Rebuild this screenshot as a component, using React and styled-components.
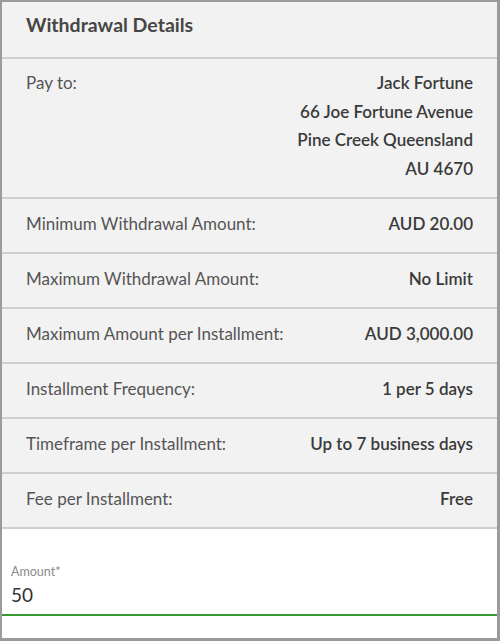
import React from "react";
import styled, { createGlobalStyle } from "styled-components";

const Global = createGlobalStyle`
  html, body { margin: 0; padding: 0; background: #ffffff; }
  body { font-family: Lato, "Open Sans", sans-serif; }
  * { box-sizing: border-box; }
`;

const Frame = styled.div`
  width: 500px;
  height: 641px;
  border-style: solid;
  border-color: #9b9b9b;
  border-width: 2px 3px 3px 2px;
  background: #ffffff;
  display: flex;
  flex-direction: column;
`;

const Panel = styled.div`
  background: #f2f2f2;
  display: flex;
  flex-direction: column;
`;

const Header = styled.div`
  height: 57px;
  padding: 0 24px 11px 24px;
  display: flex;
  align-items: center;
  font-size: 19.5px;
  font-weight: 700;
  color: #464646;
  border-bottom: 2px solid #cfcfcf;
`;

const Row = styled.div`
  display: flex;
  justify-content: space-between;
  align-items: ${(p) => (p.$multi ? "flex-start" : "center")};
  height: ${(p) => (p.$multi ? "140px" : "55px")};
  padding: ${(p) => (p.$multi ? "10px 24px 0 24px" : "0 24px 2px 24px")};
  border-bottom: 2px solid #cfcfcf;
  font-size: 17px;
  line-height: 28.5px;
`;

const Label = styled.span`
  color: #555555;
`;

const Value = styled.div`
  color: #3a3a3a;
  font-weight: 600;
  text-align: right;
  display: flex;
  flex-direction: column;
`;

const Field = styled.div`
  padding: 35px 9px 6px 9px;
  display: flex;
  flex-direction: column;
  border-bottom: 2px solid #3c9a33;
`;

const FieldLabel = styled.label`
  font-size: 12.5px;
  color: #8a8a8a;
  line-height: 16px;
  margin-bottom: 2px;
`;

const FieldValue = styled.div`
  font-size: 19px;
  color: #333333;
  line-height: 26px;
`;

const rows = [
  ["Minimum Withdrawal Amount:", "AUD 20.00"],
  ["Maximum Withdrawal Amount:", "No Limit"],
  ["Maximum Amount per Installment:", "AUD 3,000.00"],
  ["Installment Frequency:", "1 per 5 days"],
  ["Timeframe per Installment:", "Up to 7 business days"],
  ["Fee per Installment:", "Free"],
];

export default function App() {
  return (
    <>
      <Global />
      <Frame>
        <Panel>
          <Header>Withdrawal Details</Header>
          <Row $multi>
            <Label>Pay to:</Label>
            <Value>
              <span>Jack Fortune</span>
              <span>66 Joe Fortune Avenue</span>
              <span>Pine Creek Queensland</span>
              <span>AU 4670</span>
            </Value>
          </Row>
          {rows.map(([l, v]) => (
            <Row key={l}>
              <Label>{l}</Label>
              <Value>{v}</Value>
            </Row>
          ))}
        </Panel>
        <Field>
          <FieldLabel>Amount*</FieldLabel>
          <FieldValue>50</FieldValue>
        </Field>
      </Frame>
    </>
  );
}
